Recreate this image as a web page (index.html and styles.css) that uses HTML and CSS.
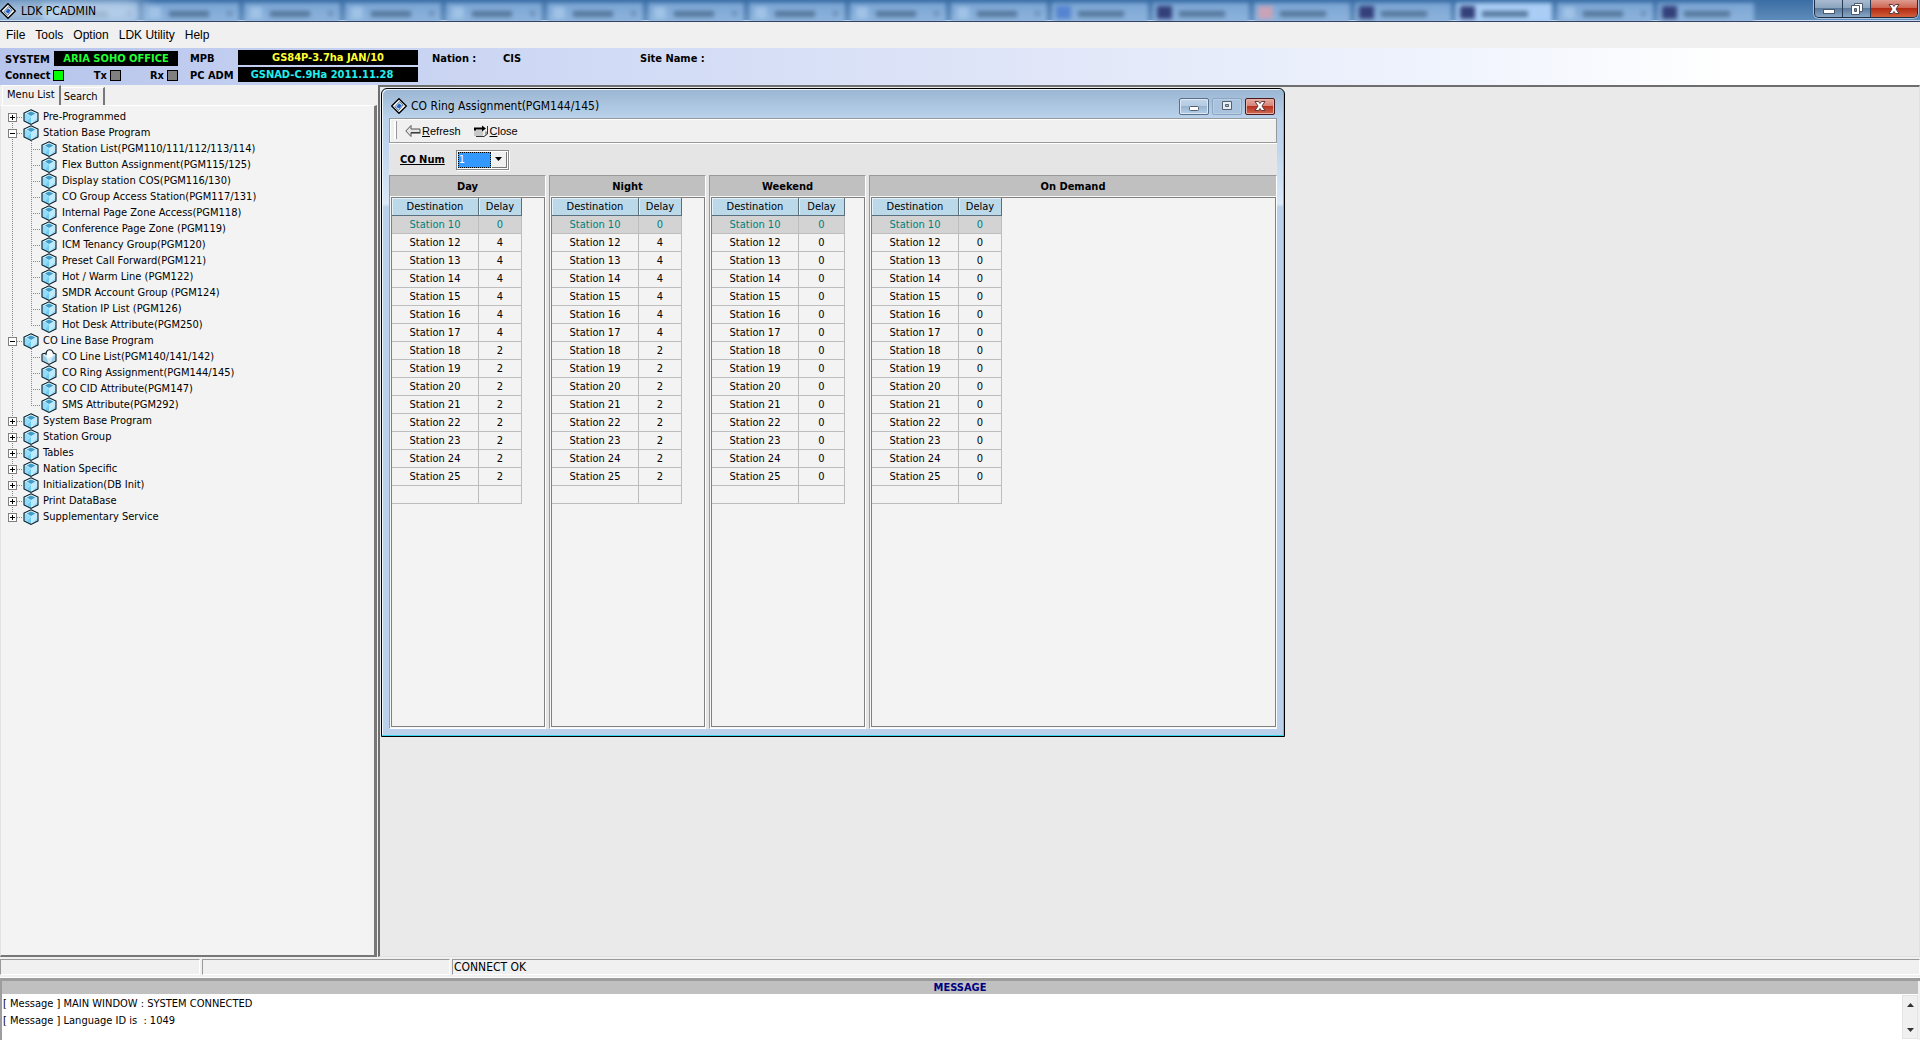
FILE: index.html
```html
<!DOCTYPE html>
<html lang="en">
<head>
<meta charset="utf-8">
<title>LDK PCADMIN</title>
<link rel="stylesheet" href="styles.css">
</head>
<body>
<svg class="defs" aria-hidden="true">
  <symbol id="logo" viewBox="0 0 16 16">
    <path d="M8 .7 15.3 8 8 15.3.7 8z" fill="#fff" stroke="#000" stroke-width="1.4"/>
    <path d="M8.6 3.6 12.2 7 7.6 12.4 3.8 8.8z" fill="#cfe0f4" stroke="#34506f" stroke-width=".8"/>
    <path d="M8 5.6 10.600 7.200 8.400 10.600 5.400 9z" fill="#1d5fc4"/>
  </symbol>
  <symbol id="cube" viewBox="0 0 16 16">
    <path d="M8 .8 15 4v8l-7 3.4L1 12V4z" fill="#a6e2fa"/>
    <path d="M8 1 15 4 8 7.4 1 4z" fill="#d9f4fe"/>
    <path d="M8 2.4 12.4 4.4 8 7 3.8 4.4z" fill="#3f9cc8"/>
    <path d="M8 7.4V15L1.4 12V4.2z" fill="#8fdcfb"/>
    <path d="M8 7.4V15l6.6-3V4.2z" fill="#bdeafc"/>
    <path d="M8 15 4 13l4-5zM14.6 9v3L9 14.6z" fill="#5cb9e2" opacity=".55"/>
    <path d="M8 .8 15 4v8l-7 3.4L1 12V4z" fill="none" stroke="#0a1a22" stroke-width="1.1"/>
  </symbol>
  <symbol id="cube-open" viewBox="0 0 16 16">
    <path d="M1 5 5 3.400 6 1l4-.6 2 2.200L15 5v7l-7 3.400L1 12z" fill="#d3ecf8"/>
    <path d="M1.600 6 5 8l3 7-6.400-3zM14.600 6 11 9l-1 5 4.600-2z" fill="#9ccfe8"/>
    <path d="M5 4 7 1l4 0 1.500 3-2 4-4 1.500z" fill="#fff"/>
    <path d="M5 6C5 3 6 .8 8.500.7S12 2.600 12.500 4.500M1 5l4-1M1 5v7l7 3.400L15 12V5l-2.500-1" fill="none" stroke="#0a1a22" stroke-width="1.100"/>
  </symbol>
</svg>

<header class="titlebar">
  <div class="ghost-tabs" aria-hidden="true">
    <i></i><i></i><i></i><i></i><i></i><i></i><i></i><i></i><i></i><i></i><i class="blue"></i><i class="dark"></i><i class="red"></i><i class="dark"></i><i class="dark lit"></i><i></i><i class="dark"></i>
  </div>
  <svg class="logo"><use href="#logo"/></svg>
  <h1>LDK PCADMIN</h1>
  <div class="frame-buttons">
    <button aria-label="Minimize"><svg viewBox="0 0 14 12"><rect x="1.500" y="6.500" width="11" height="4" fill="#fff" stroke="#4a5a70"/></svg></button>
    <button aria-label="Restore"><svg viewBox="0 0 14 12"><path d="M4.500.5h8v8h-8z" fill="#fff" stroke="#4a5a70"/><path d="M1.500 2.500h8v9h-8z" fill="#fff" stroke="#4a5a70"/><path d="M4.500 5.500h2v3h-2z" fill="#7a8ea8" stroke="#4a5a70"/></svg></button>
    <button class="close" aria-label="Close"><svg viewBox="0 0 14 12"><path d="M2 1.500h3.500L7 3.500l1.500-2H12L9 6l3 4.500H8.500L7 8.500l-1.500 2H2L5 6z" fill="#fff" stroke="#5b3a40"/></svg></button>
  </div>
</header>

<nav class="menubar">
  <a href="#">File</a><a href="#">Tools</a><a href="#">Option</a><a href="#">LDK Utility</a><a href="#">Help</a>
</nav>

<section class="infobar">
  <div class="info-left">
    <div class="line"><b>SYSTEM</b><output class="lcd green">ARIA SOHO OFFICE</output></div>
    <div class="line leds"><span>Connect<i class="led on"></i></span><span>Tx<i class="led"></i></span><span>Rx<i class="led"></i></span></div>
  </div>
  <dl class="versions">
    <dt>MPB</dt><dd class="lcd yellow">GS84P-3.7ha JAN/10</dd>
    <dt>PC ADM</dt><dd class="lcd cyan">GSNAD-C.9Ha 2011.11.28</dd>
  </dl>
  <div class="site"><span>Nation :</span><span>CIS</span><span>Site Name :</span></div>
</section>

<main class="workspace">
  <aside class="sidebar">
    <div class="tabs" role="tablist">
      <button role="tab" aria-selected="true" class="tab active">Menu List</button><button role="tab" aria-selected="false" class="tab">Search</button>
    </div>
    <div class="tab-page">
      <ul class="tree" id="tree"></ul>
    </div>
  </aside>

  <div class="desktop">
    <section class="window">
      <header class="window-title">
        <svg class="logo"><use href="#logo"/></svg>
        <h2>CO Ring Assignment(PGM144/145)</h2>
        <div class="window-buttons">
          <button aria-label="Minimize"><svg viewBox="0 0 14 12"><rect x="2.500" y="6.500" width="9" height="4" rx="1" fill="#fff" stroke="#55606e"/></svg></button>
          <button class="off" aria-label="Maximize"><svg viewBox="0 0 14 12"><path d="M2.500 1.500h9v8h-9z" fill="#e6edf4" stroke="#55606e"/><path d="M5.500 4.500h3v2h-3z" fill="#a9c1d9" stroke="#55606e"/></svg></button>
          <button class="close" aria-label="Close"><svg viewBox="0 0 14 12"><path d="M2 1.500h3.500L7 3.500l1.500-2H12L9 6l3 4.500H8.500L7 8.500l-1.500 2H2L5 6z" fill="#fff" stroke="#5b3a40"/></svg></button>
        </div>
      </header>
      <div class="window-body">
        <div class="toolbar">
          <button><svg viewBox="0 0 16 14"><path d="M.8 7 6 1.500V5h9v3.500H6v4z" fill="#e4e4e4" stroke="#555"/><path d="M6 9h9.500" stroke="#222"/></svg><span><u>R</u>efresh</span></button>
          <button><svg viewBox="0 0 16 14"><path d="M1 6h9v6H1z" fill="#c8c8c8"/><path d="M1 6.500V3.500h8V1.500l4 3-4 3V5.500H3v1z" fill="#000"/><path d="M14.500 2v8L11 12.500H3" fill="none" stroke="#333"/><path d="M12 7.500h2v2l-2 2z" fill="#999"/></svg><span><u>C</u>lose</span></button>
        </div>
        <div class="co-row">
          <label for="co-num">CO Num</label>
          <span class="combo"><select id="co-num"><option>1</option></select><i class="drop"><svg viewBox="0 0 7 4"><path d="M0 0h7L3.500 4z"/></svg></i></span>
        </div>
        <div class="panels" id="panels"></div>
      </div>
    </section>
  </div>
</main>

<div class="statusbar"><span></span><span></span><span>CONNECT OK</span></div>

<section class="messages">
  <h3>MESSAGE</h3>
  <div class="log-box">
    <div class="log" role="log">
      <p>[ Message ] MAIN WINDOW : SYSTEM CONNECTED</p>
      <p>[ Message ] Language ID is&nbsp; : 1049</p>
    </div>
    <div class="scroll">
      <button aria-label="Scroll up"><svg viewBox="0 0 7 4"><path d="M0 4h7L3.500 0z"/></svg></button>
      <button aria-label="Scroll down"><svg viewBox="0 0 7 4"><path d="M0 0h7L3.500 4z"/></svg></button>
    </div>
  </div>
</section>
<script src="app.js"></script>
</body>
</html>
```
FILE: app.js
```js
const menu = [
  ["Pre-Programmed"],
  ["Station Base Program", [
    "Station List(PGM110/111/112/113/114)", "Flex Button Assignment(PGM115/125)",
    "Display station COS(PGM116/130)", "CO Group Access Station(PGM117/131)",
    "Internal Page Zone Access(PGM118)", "Conference Page Zone (PGM119)",
    "ICM Tenancy Group(PGM120)", "Preset Call Forward(PGM121)",
    "Hot / Warm Line (PGM122)", "SMDR Account Group (PGM124)",
    "Station IP List (PGM126)", "Hot Desk Attribute(PGM250)"]],
  ["CO Line Base Program", [
    "CO Line List(PGM140/141/142)", "CO Ring Assignment(PGM144/145)",
    "CO CID Attribute(PGM147)", "SMS Attribute(PGM292)"]],
  ["System Base Program"], ["Station Group"], ["Tables"], ["Nation Specific"],
  ["Initialization(DB Init)"], ["Print DataBase"], ["Supplementary Service"]
];

const item = (text, icon = "cube") =>
  `<i class="stub"></i><svg class="cube"><use href="#${icon}"/></svg><a href="#">${text}</a>`;

document.getElementById("tree").innerHTML = menu.map(([name, children]) => `
  <li><div class="node"><button class="expander ${children ? "open" : ""}" aria-label="Toggle ${name}"></button>${item(name)}</div>
  ${children ? `<ul>${children.map(c =>
    `<li class="node">${item(c, c.startsWith("CO Line List") ? "cube-open" : "cube")}</li>`).join("")}</ul>` : ""}
  </li>`).join("");

const stations = [10, 12, 13, 14, 15, 16, 17, 18, 19, 20, 21, 22, 23, 24, 25];
const ring = n => n === 10 ? 0 : n < 18 ? 4 : 2;
const none = () => 0;

document.getElementById("panels").innerHTML = [
  ["Day", ring, ""], ["Night", ring, ""], ["Weekend", none, "wide-delay"], ["On Demand", none, ""]
].map(([title, delay, cls]) => `
  <section class="panel"><h3>${title}</h3><div class="grid">
  <table class="${cls}"><thead><tr><th>Destination</th><th>Delay</th></tr></thead><tbody>
  ${stations.map(n => `<tr><td>Station ${n}</td><td>${delay(n)}</td></tr>`).join("")}
  <tr><td></td><td></td></tr></tbody></table></div></section>`).join("");
```
FILE: styles.css
```css
* { box-sizing: border-box; }
body {
  margin: 0;
  height: 100vh;
  display: flex;
  flex-direction: column;
  overflow: hidden;
  background: #f0f0f0;
  color: #000;
  font: 11px/16px "DejaVu Sans Condensed", "DejaVu Sans", sans-serif;
}
h1, h2, h3, p, ul, dl, dd { margin: 0; padding: 0; }
h1, h2, h3 { font-weight: normal; font-size: 12px; }
ul { list-style: none; }
a { color: inherit; text-decoration: none; }
button { margin: 0; padding: 0; border: 0; background: none; font: inherit; color: inherit; }
svg { display: block; }
.defs { position: absolute; width: 0; height: 0; }
.logo { width: 16px; height: 16px; flex: none; }

/* main title bar */
.titlebar {
  position: relative;
  flex: none;
  display: flex;
  align-items: center;
  gap: 5px;
  height: 22px;
  overflow: hidden;
  background: linear-gradient(#3a6ea5, #5380b2 60%, #5f8dbd);
  border-bottom: 1px solid #33415f;
  box-shadow: inset 0 -1px #c5d8ee;
}
.titlebar h1 { position: relative; z-index: 0; flex: 1; }
.titlebar > .logo { position: relative; z-index: 1; }
.titlebar h1::before {
  content: "";
  position: absolute;
  z-index: -1;
  inset: -2px auto -2px -30px;
  width: 150px;
  background: rgba(205, 222, 241, .85);
  filter: blur(9px);
}
.ghost-tabs {
  position: absolute;
  inset: 3px 0 0 42px;
  display: flex;
  gap: 5px;
  filter: blur(2px);
}
.ghost-tabs i {
  width: 96px;
  height: 20px;
  background:
    linear-gradient(#55789c, #55789c) 26px 8px / 40px 6px no-repeat,
    linear-gradient(#6c90b8, #6c90b8) 84px 8px / 5px 5px no-repeat,
    linear-gradient(#9fc2e6, #9fc2e6) 6px 4px / 12px 12px no-repeat,
    linear-gradient(#7ba5d4, #8fb5de);
}
.ghost-tabs .blue, .ghost-tabs .dark, .ghost-tabs .red {
  background:
    linear-gradient(#55789c, #55789c) 26px 8px / 46px 6px no-repeat,
    linear-gradient(var(--icon), var(--icon)) 4px 3px / 15px 13px no-repeat,
    linear-gradient(var(--tab, #7ba5d4), var(--tab, #8fb5de));
}
.ghost-tabs .blue { --icon: #5585d0; }
.ghost-tabs .dark { --icon: #33407a; }
.ghost-tabs .red { --icon: #c9a3b8; }
.ghost-tabs .lit { --tab: #a9cdf5; }

.frame-buttons {
  position: relative;
  align-self: flex-start;
  display: flex;
  height: 18px;
  margin-right: 2px;
  border: 1px solid #1d2d44;
  border-top: 0;
  border-radius: 0 0 5px 5px;
  box-shadow: 0 0 0 1px #a9c0d8;
  overflow: hidden;
}
.frame-buttons button {
  width: 28px;
  display: grid;
  place-items: center;
  background: linear-gradient(#a9bbd0, #8da5bf 45%, #5c7a9c 50%, #8aa7c6);
  border-right: 1px solid #2a3c55;
}
.frame-buttons .close { width: 46px; border: 0; background: linear-gradient(#dc9c90, #cf6552 45%, #b52a12 50%, #d0603c); }
.frame-buttons svg, .window-buttons svg { width: 14px; height: 12px; }

.menubar {
  flex: none;
  display: flex;
  gap: 10px;
  height: 26px;
  padding: 0 6px;
  font: 12px/26px "Liberation Sans", Arial, sans-serif;
}

/* system info strip */
.infobar {
  flex: none;
  display: flex;
  height: 37px;
  padding: 2px 5px;
  font-weight: bold;
  white-space: nowrap;
  background: linear-gradient(90deg, #b7c5ec, #d0daf5 30%, #dfe5f8 52%, #f0f4fd 76%, #fff 90%);
}
.info-left { width: 173px; padding-top: 1px; }
.line { display: flex; justify-content: space-between; height: 15px; line-height: 15px; }
.line + .line { margin-top: 2px; }
.line b { line-height: 17px; }
.lcd { height: 15px; background: #000; text-align: center; line-height: 15px; }
.green { width: 124px; color: #2f3; }
.yellow { color: #ff3; }
.cyan { color: #2ee; padding-right: 12px; }
.leds span { display: flex; align-items: center; gap: 3px; }
.led { width: 11px; height: 11px; border: 1px solid #000; background: #808080; }
.led.on { background: #0f0; }
.versions { display: grid; grid-template-columns: 48px 180px; grid-auto-rows: 15px; row-gap: 2px; margin-left: 12px; }
.versions dt { line-height: 17px; }
.site { display: flex; margin-left: 14px; line-height: 17px; }
.site span:nth-child(1) { width: 71px; }
.site span:nth-child(2) { width: 137px; }

/* workspace */
.workspace { flex: 1; display: flex; min-height: 0; }
.sidebar { width: 377px; flex: none; display: flex; flex-direction: column; }
.tabs { display: flex; align-items: flex-end; height: 20px; padding-left: 2px; }
.tab {
  height: 18px;
  padding: 1px 5px 0 3px;
  border: solid;
  border-width: 1px 2px 0 0;
  border-color: #fff #777 #fff #fff;
}
.tab.active { height: 20px; padding: 0 4px 2px 4px; border-left: 1px solid #fff; }
.tab-page {
  flex: 1;
  min-height: 0;
  padding: 3px 0 0 7px;
  background: #f3f3f3;
  border: solid;
  border-width: 1px 3px 2px 1px;
  border-color: #fff #777 #777 #e3e3e3;
}
.tree, .tree ul {
  background: repeating-linear-gradient(#888 0 1px, transparent 1px 2px) 4px 8px / 1px calc(100% - 16px) no-repeat;
}
.tree ul { margin-left: 19px; background-position: 4px 0; background-size: 1px calc(100% - 8px); }
.node { display: flex; align-items: center; height: 16px; }
.tree ul .node { padding-left: 4px; }
.expander {
  width: 9px;
  height: 9px;
  border: 1px solid #808080;
  background:
    linear-gradient(#000, #000) 1px 3px / 5px 1px no-repeat,
    linear-gradient(#000, #000) 3px 1px / 1px 5px no-repeat,
    #fff;
}
.expander.open { background: linear-gradient(#000, #000) 1px 3px / 5px 1px no-repeat, #fff; }
.stub { width: 6px; height: 1px; background: repeating-linear-gradient(90deg, #888 0 1px, transparent 1px 2px); }
.tree ul .stub { width: 10px; }
.cube { width: 16px; height: 16px; margin-right: 4px; }
.tree ul .cube { margin-right: 5px; }

.desktop {
  position: relative;
  flex: 1;
  margin-left: 1px;
  background: #eaeaea;
  border: solid;
  border-width: 2px 1px 1px 2px;
  border-color: #6e6e6e #e0e0e0 #e0e0e0 #6e6e6e;
}

/* child window */
.window {
  position: absolute;
  left: 1px;
  top: 1px;
  width: 904px;
  height: 649px;
  display: flex;
  flex-direction: column;
  padding: 0 7px 7px;
  border: 1px solid #000;
  border-radius: 6px 6px 0 0;
  background: linear-gradient(#9ab5d2, #b9d1ea 28px, #c0d6ee 60px, #dbe9f8 115px, #b9d1ea 118px);
  box-shadow: inset -1px -1px #35d5ef, inset 1px 1px #eef5fc;
}
.window-title { display: flex; align-items: center; gap: 4px; height: 29px; padding: 5px 2px 0 2px; }
.window-title h2 { flex: 1; }
.window-buttons { display: flex; gap: 3px; }
.window-buttons button {
  width: 30px;
  height: 17px;
  display: grid;
  place-items: center;
  border: 1px solid #5a6f88;
  border-radius: 2px;
  background: linear-gradient(#c3d6ea, #b5cbe2 45%, #98b3cf 50%, #b5cfe8);
  box-shadow: inset 0 0 0 1px #dce8f4;
}
.window-buttons .off { border-color: #8ba5c2; background: #a9c3de; box-shadow: inset 0 0 0 1px #b9cfe6; }
.window-buttons .close { border-color: #4a1820; background: linear-gradient(#e5a99f, #d8857a 45%, #b8321f 50%, #cf6a50); box-shadow: inset 0 0 0 1px #e8b0a5; }
.window-body { flex: 1; display: flex; flex-direction: column; min-height: 0; background: #e5e5e5; }
.toolbar {
  display: flex;
  gap: 12px;
  height: 25px;
  padding: 2px 4px;
  border: 1px solid #999;
  background: #f0f0f0;
  box-shadow: inset 1px 1px #fff, 0 1px #fff;
  font: 11px/20px "Liberation Sans", Arial, sans-serif;
}
.toolbar::before { content: ""; width: 2px; height: 18px; margin-right: -4px; border-right: 1px solid #999; background: #fff; }
.toolbar button { display: flex; align-items: center; gap: 1px; }
.toolbar svg { width: 16px; height: 14px; }
.co-row { display: flex; align-items: center; gap: 11px; height: 32px; padding: 1px 0 0 11px; }
.co-row label { font-weight: bold; text-decoration: underline; }
.combo {
  position: relative;
  display: flex;
  width: 53px;
  height: 20px;
  padding: 1px;
  border: 1px solid #888;
  background: #fff;
  box-shadow: 1px 1px #fff;
}
.combo select {
  appearance: none;
  width: 33px;
  margin: 0;
  padding: 0;
  border: 1px dotted #000;
  border-radius: 0;
  background: #3399ff;
  color: #fff;
  font: inherit;
  line-height: 14px;
}
.drop {
  display: grid;
  place-items: center;
  flex: 1;
  margin-left: 1px;
  background: #f0f0f0;
  border: solid;
  border-width: 0 1px 1px 0;
  border-color: #777;
  pointer-events: none;
}
.drop svg { width: 7px; height: 4px; }

.panels { flex: 1; display: grid; grid-template-columns: 157px 157px 157px 1fr; gap: 3px; min-height: 0; }
.panel {
  display: flex;
  flex-direction: column;
  border: solid;
  border-width: 1px;
  border-color: #999 #fff #fff #999;
  background: #f7f7f7;
}
.panel h3 { height: 20px; background: #c0c0c0; text-align: center; font-weight: bold; font-size: 11px; line-height: 21px; }
.grid { flex: 1; margin: 1px 0 1px 1px; border: 1px solid #808080; background: #f3f3f3; }
table { table-layout: fixed; width: 130px; border-collapse: separate; border-spacing: 0; }
table.wide-delay { width: 133px; }
th, td { height: 18px; padding: 1px 0 0; text-align: center; font-weight: normal; line-height: 16px; border: solid #bdbdbd; border-width: 0 1px 1px 0; }
th:first-child, td:first-child { width: 87px; }
th { background: #bcd9ea; border-color: #5b6f7c; box-shadow: inset 1px 1px #e3f1f9; }
tbody tr:first-child td { background: #d3d3d3; color: #008080; }

/* status bar and messages */
.statusbar { flex: none; display: grid; grid-template-columns: 200px 248px 1fr; gap: 2px; height: 21px; padding: 2px 0; border-bottom: 1px solid #fff; }
.statusbar span {
  border: solid;
  border-width: 1px;
  border-color: #999 #fff #fff #999;
  padding-left: 1px;
  font-size: 12px;
  line-height: 14px;
}
.messages { flex: none; height: 62px; display: flex; flex-direction: column; border: solid #9d9d9d; border-width: 3px 0 0 2px; padding-right: 2px; }
.messages h3 { height: 13px; background: #c0c0c0; color: #000080; text-align: center; font-weight: bold; font-size: 11px; line-height: 13px; }
.log-box { flex: 1; display: flex; background: #fff; }
.log { flex: 1; padding: 1px; line-height: 17px; }
.scroll { width: 16px; margin: 1px 0; display: flex; flex-direction: column; justify-content: space-between; background: #f0f0f0; border: 1px solid #e4e4e4; }
.scroll button { height: 17px; display: grid; place-items: center; }
.scroll svg { width: 7px; height: 4px; fill: #333; }
```
